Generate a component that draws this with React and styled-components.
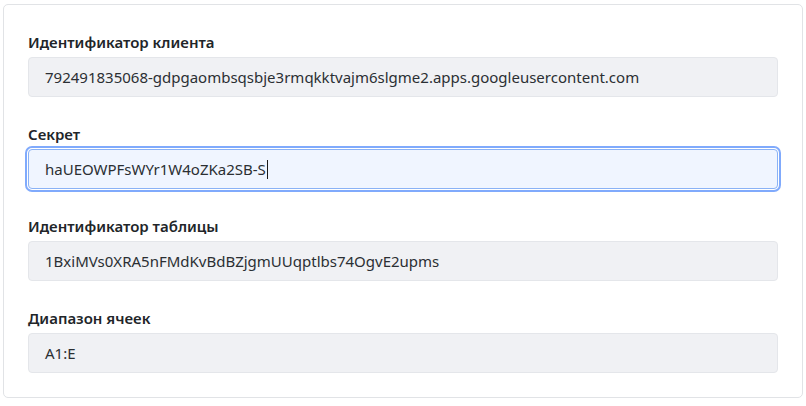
import React from 'react';
import styled, { createGlobalStyle } from 'styled-components';

const GlobalStyle = createGlobalStyle`
  body {
    margin: 0;
    background: #ffffff;
    font-family: "Noto Sans", "Open Sans", sans-serif;
    color: #212529;
  }
`;

const Page = styled.div`
  padding: 4px 3px 8px 3px;
`;

const Card = styled.div`
  border: 1px solid #e1e3e6;
  border-radius: 5px;
  padding: 26px 24px 24px 24px;
  display: flex;
  flex-direction: column;
  gap: 26px;
`;

const Field = styled.div`
  display: flex;
  flex-direction: column;
  gap: 4px;
`;

const Label = styled.label`
  font-size: 15px;
  font-weight: 600;
  line-height: 22px;
  color: #212529;
`;

const Input = styled.div`
  height: 40px;
  box-sizing: border-box;
  display: flex;
  align-items: center;
  padding: 0 16px;
  font-size: 15px;
  color: #2b2f33;
  border-radius: 4px;
  border: 1px solid ${(p) => (p.$focused ? '#8ab2f6' : '#e4e6ea')};
  background: ${(p) => (p.$focused ? '#f0f5ff' : '#f0f1f4')};
  outline: ${(p) => (p.$focused ? '2px solid #80aafc' : 'none')};
  outline-offset: 1px;
`;

const Caret = styled.span`
  display: inline-block;
  width: 1px;
  height: 19px;
  background: #1a1a1a;
  margin-left: 1px;
`;

const fields = [
  { label: 'Идентификатор клиента', value: '792491835068-gdpgaombsqsbje3rmqkktvajm6slgme2.apps.googleusercontent.com' },
  { label: 'Секрет', value: 'haUEOWPFsWYr1W4oZKa2SB-S', focused: true },
  { label: 'Идентификатор таблицы', value: '1BxiMVs0XRA5nFMdKvBdBZjgmUUqptlbs74OgvE2upms' },
  { label: 'Диапазон ячеек', value: 'A1:E' },
];

export default function App() {
  return (
    <Page>
      <GlobalStyle />
      <Card>
        {fields.map((f) => (
          <Field key={f.label}>
            <Label>{f.label}</Label>
            <Input $focused={f.focused}>
              {f.value}
              {f.focused && <Caret />}
            </Input>
          </Field>
        ))}
      </Card>
    </Page>
  );
}
